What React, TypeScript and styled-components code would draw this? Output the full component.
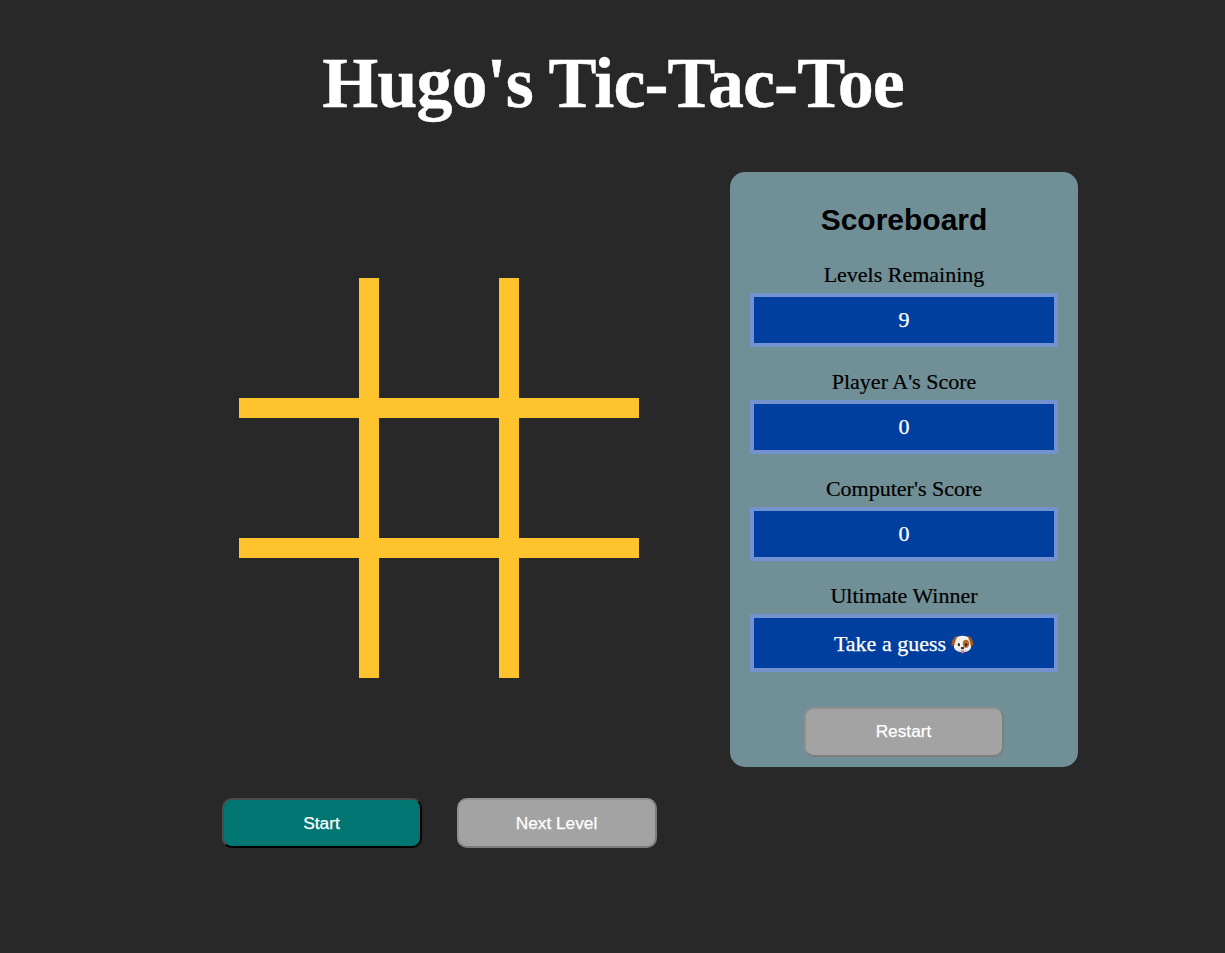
import React from "react";
import styled, { createGlobalStyle } from "styled-components";

const GlobalStyle = createGlobalStyle`
  body {
    margin: 0;
    background: #282828;
    font-family: "Liberation Serif", "Times New Roman", serif;
  }
`;

const Page = styled.div`
  box-sizing: border-box;
  width: 1225px;
  height: 953px;
  padding-top: 42px;
  overflow: hidden;
`;

const Title = styled.h1`
  margin: 0;
  height: 130px;
  padding-left: 1px;
  line-height: 83px;
  font-size: 72px;
  font-weight: 700;
  letter-spacing: -0.92px;
  color: #fff;
  text-align: center;
  -webkit-text-stroke: 0.4px #fff;
`;

const Main = styled.main`
  display: flex;
  align-items: flex-start;
  gap: 73px;
  padding-left: 222px;
`;

const Game = styled.section`
  display: flex;
  flex-direction: column;
  align-items: center;
  gap: 120px;
  width: 435px;
  padding-top: 106px;
`;

const Board = styled.div`
  display: grid;
  grid-template-columns: repeat(3, 120px);
  grid-template-rows: repeat(3, 120px);
  gap: 20px;
  margin-right: 1px;
  background: #ffc32d;
`;

const Cell = styled.div`
  background: #282828;
`;

const Controls = styled.div`
  display: flex;
  gap: 35px;
`;

const Button = styled.button<{ $active?: boolean; $raised?: boolean }>`
  box-sizing: border-box;
  width: 200px;
  height: 50px;
  padding: 0 1px ${(p) => (p.$raised ? 2 : 0)}px 0;
  border: 2px solid;
  border-color: ${(p) => (p.$active ? "#4c4c4c #000 #000 #4c4c4c" : "#909090 #7d7d7d #7d7d7d #909090")};
  border-radius: 10px;
  background: ${(p) => (p.$active ? "#007672" : "#a3a3a3")};
  color: #fff;
  font-family: "Liberation Sans", Arial, sans-serif;
  font-size: 17.3px;
  -webkit-text-stroke: 0.25px #fff;
`;

const Scoreboard = styled.aside`
  box-sizing: border-box;
  display: flex;
  flex-direction: column;
  align-items: center;
  width: 348px;
  height: 595px;
  padding: 29px 20px 10px;
  border-radius: 15px;
  background: #718f96;
`;

const Heading = styled.h2`
  margin: 0 0 25px;
  line-height: 38px;
  font-family: "Liberation Sans", Arial, sans-serif;
  font-size: 30px;
  font-weight: 700;
  color: #000;
`;

const Entry = styled.div`
  width: 100%;
  margin-bottom: 24px;
  text-align: center;
`;

const Label = styled.div`
  height: 29px;
  line-height: 21px;
  font-size: 22px;
  color: #000;
  -webkit-text-stroke: 0.2px #000;
`;

const Value = styled.div<{ $tall?: boolean }>`
  box-sizing: border-box;
  display: flex;
  align-items: center;
  justify-content: center;
  gap: 5px;
  height: ${(p) => (p.$tall ? 58 : 54)}px;
  padding-top: ${(p) => (p.$tall ? 2 : 0)}px;
  border: 4px solid #7393d0;
  background: #003f9f;
  color: #fff;
  font-size: 22px;
  -webkit-text-stroke: 0.25px #fff;
`;

const RestartSlot = styled.div`
  margin-top: auto;
  height: 50px;
`;

const Puppy = () => (
  <svg width="23" height="21" viewBox="0 0 24 22" role="img" aria-label="Dog face">
    <path d="M4.5 4.5C7 0.8 17 0.8 19.5 4.5C21 8 22.2 12.5 20 16C17 20 7 20 4 16C1.8 12.5 3 8 4.5 4.5Z" fill="#f4f1ec" />
    <path d="M6.4 2.2C2.8 2.6 0.6 7.5 0.6 11.5C1.2 13.8 3.4 12 4.2 9C4.7 6.5 6.2 4.5 6.4 2.2Z" fill="#a65c1e" />
    <path d="M17.6 2.2C21.2 2.6 23.4 7.5 23.4 11.5C22.8 13.8 20.6 12 19.8 9C19.3 6.5 17.8 4.5 17.6 2.2Z" fill="#a65c1e" />
    <path d="M0.7 10.6C1.2 13 2.8 12.4 3.7 10.8M23.3 10.6C22.8 13 21.2 12.4 20.3 10.8" fill="none" stroke="#7a4115" strokeWidth="0.9" />
    <ellipse cx="15.6" cy="10.3" rx="3.3" ry="4.3" fill="#b06a2c" />
    <ellipse cx="8.2" cy="11.2" rx="1.2" ry="1.7" fill="#2c221e" />
    <ellipse cx="15.7" cy="11.2" rx="1.2" ry="1.7" fill="#2c221e" />
    <path d="M8 17Q10.5 17.4 12 16Q13.5 17.4 16 17" fill="none" stroke="#b9b0a8" strokeWidth="0.7" />
    <ellipse cx="12" cy="14.7" rx="1.8" ry="1.2" fill="#231d20" />
    <path d="M10.4 17.2H13.6V19Q12 21.6 10.4 19Z" fill="#ee6b87" />
  </svg>
);

const scores = [
  { label: "Levels Remaining", value: "9" },
  { label: "Player A's Score", value: "0" },
  { label: "Computer's Score", value: "0" },
];

export default function App() {
  return (
    <Page>
      <GlobalStyle />
      <Title>Hugo's Tic-Tac-Toe</Title>
      <Main>
        <Game>
          <Board>
            {Array.from({ length: 9 }, (_, i) => (
              <Cell key={i} />
            ))}
          </Board>
          <Controls>
            <Button $active>Start</Button>
            <Button>Next Level</Button>
          </Controls>
        </Game>
        <Scoreboard>
          <Heading>Scoreboard</Heading>
          {scores.map((s) => (
            <Entry key={s.label}>
              <Label>{s.label}</Label>
              <Value>{s.value}</Value>
            </Entry>
          ))}
          <Entry>
            <Label>Ultimate Winner</Label>
            <Value $tall>
              <span>Take a guess</span>
              <Puppy />
            </Value>
          </Entry>
          <RestartSlot>
            <Button $raised>Restart</Button>
          </RestartSlot>
        </Scoreboard>
      </Main>
    </Page>
  );
}
